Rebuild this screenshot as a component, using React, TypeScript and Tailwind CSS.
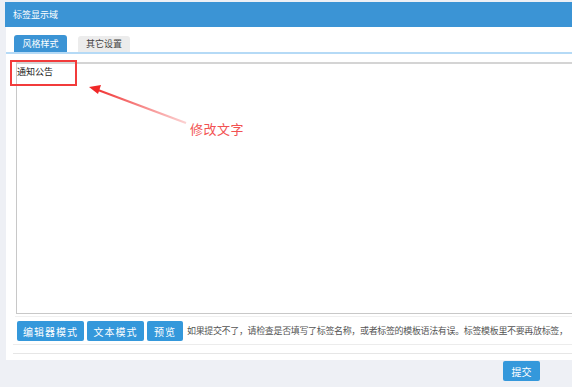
import React from "react";

// Tag editor panel with an annotation overlay
function Btn({ children, className = "" }: { children: React.ReactNode; className?: string }) {
  return (
    <button
      className={
        "h-[20px] rounded-[2px] bg-[#3498db] text-white text-[10px] tracking-[1px] flex items-center justify-center " +
        className
      }
    >
      {children}
    </button>
  );
}

export default function App() {
  return (
    <div className="relative w-[572px] h-[387px] overflow-hidden bg-[#eef0f5] font-['Microsoft_YaHei','Noto_Sans_CJK_SC',sans-serif] text-[#333]">
      <div className="w-[720px] pl-[5px] pt-[2px]">
        {/* title bar */}
        <div className="h-[25px] bg-[#3b94d5] text-white text-[9px] pl-[8px] flex items-center">
          标签显示域
        </div>

        {/* panel */}
        <div className="bg-white ml-px h-[333px] flex flex-col">
          {/* tabs */}
          <div className="pt-[8px] pl-[8px] flex items-end gap-[11px] border-b-2 border-[#b5daf6]">
            <div className="w-[53px] h-[17px] bg-[#3b94d5] rounded-t-[3px] text-white text-[9px] flex items-center justify-center">
              风格样式
            </div>
            <div className="w-[52px] h-[16px] bg-[#ececec] rounded-t-[3px] text-[9px] text-[#444] flex items-center justify-center">
              其它设置
            </div>
          </div>

          {/* editor */}
          <div className="mt-[8px] ml-[10px] h-[252px] border border-[#c8c8c8] border-t-2 border-t-[#d4d4d4] pl-0 pt-[1px] text-[9px] text-[#222]">
            通知公告
          </div>

          <div className="mt-[2px] ml-[9px] border-t border-[#f0f0f0]" />

          {/* action row */}
          <div className="ml-[11px] mt-[4px] flex items-center gap-[3px]">
            <Btn className="w-[67px]">编辑器模式</Btn>
            <Btn className="w-[57px]">文本模式</Btn>
            <Btn className="w-[36px]">预览</Btn>
            <span className="text-[9px] text-[#555] whitespace-nowrap ml-[1px] tracking-[-0.35px]">
              如果提交不了，请检查是否填写了标签名称，或者标签的模板语法有误。标签模板里不要再放标签，
            </span>
          </div>

          <div className="mt-[3px] ml-[7px] border-t border-[#ececec]" />
          <div className="mt-[8px] ml-[7px] border-t border-[#e6e6e6]" />
        </div>

        {/* submit */}
        <div className="pl-[498px] pt-[1px]">
          <button className="w-[37px] h-[20px] rounded-[2px] bg-[#3498db] text-white text-[10px] flex items-center justify-center">
            提交
          </button>
        </div>
      </div>

      {/* annotation */}
      <div className="absolute left-[10px] top-[60px] w-[67px] h-[26px] border-2 border-[#f23b3b]" />
      <svg className="absolute left-0 top-0" width="572" height="387">
        <defs>
          <linearGradient id="fade" x1="186" y1="123" x2="92" y2="88" gradientUnits="userSpaceOnUse">
            <stop offset="0" stopColor="#f24848" stopOpacity="0.25" />
            <stop offset="1" stopColor="#f02828" stopOpacity="1" />
          </linearGradient>
        </defs>
        <line x1="186" y1="123" x2="98" y2="90" stroke="url(#fade)" strokeWidth="2" />
        <polygon points="89,87 101,85 98,94" fill="#f02828" />
      </svg>
      <div className="absolute left-[190px] top-[119px] text-[13px] text-[#f25252] tracking-[0.5px]">
        修改文字
      </div>
    </div>
  );
}
